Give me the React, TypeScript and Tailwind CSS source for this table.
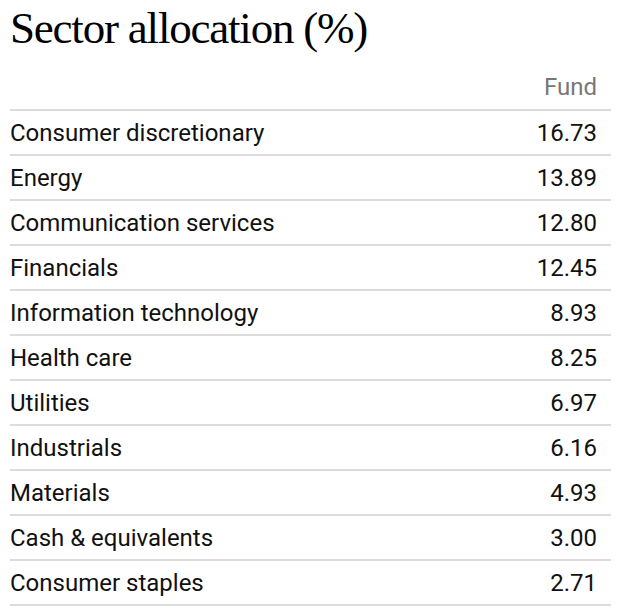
import React from "react";

const rows: [string, string][] = [
  ["Consumer discretionary", "16.73"],
  ["Energy", "13.89"],
  ["Communication services", "12.80"],
  ["Financials", "12.45"],
  ["Information technology", "8.93"],
  ["Health care", "8.25"],
  ["Utilities", "6.97"],
  ["Industrials", "6.16"],
  ["Materials", "4.93"],
  ["Cash & equivalents", "3.00"],
  ["Consumer staples", "2.71"],
];

export default function App() {
  return (
    <div className="w-[624px] h-[612px] bg-white pl-[10px] pr-[13px] pt-[4px]">
      <h1 className="font-['Liberation_Serif',serif] text-[45px] leading-[48px] text-black tracking-[-1.2px]">
        Sector allocation (%)
      </h1>
      <div className="mt-[15px] font-['Roboto',sans-serif] text-[24px]">
        <div className="flex justify-end items-end h-[44px] pr-[14px] border-b-2 border-[#dcdcdc] pb-[4px] text-[#777777]">
          Fund
        </div>
        {rows.map(([name, val]) => (
          <div
            key={name}
            className="flex justify-between items-center h-[45px] pr-[14px] border-b-2 border-[#dcdcdc] text-[#111111]"
          >
            <span>{name}</span>
            <span>{val}</span>
          </div>
        ))}
      </div>
    </div>
  );
}
